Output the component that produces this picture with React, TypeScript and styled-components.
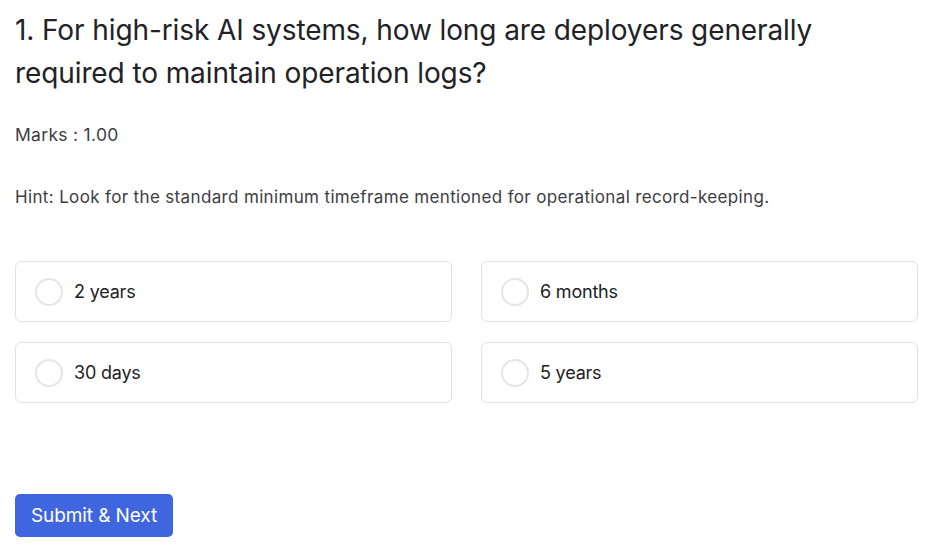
import styled, { createGlobalStyle } from "styled-components";

const GlobalStyle = createGlobalStyle`
  body {
    margin: 0;
    background: #ffffff;
    font-family: Inter, "Noto Sans", sans-serif;
    color: #222226;
  }
`;

const options = ["2 years", "6 months", "30 days", "5 years"];

export default function App() {
  return (
    <>
      <GlobalStyle />
      <StyledPage>
        <StyledQuestion>
          1. For high-risk AI systems, how long are deployers generally required
          to maintain operation logs?
        </StyledQuestion>
        <StyledMarks>Marks : 1.00</StyledMarks>
        <StyledHint>
          Hint: Look for the standard minimum timeframe mentioned for
          operational record-keeping.
        </StyledHint>
        <StyledOptions>
          {options.map((option) => (
            <StyledOption key={option}>
              <StyledRadio />
              <span>{option}</span>
            </StyledOption>
          ))}
        </StyledOptions>
        <StyledSubmit>Submit &amp; Next</StyledSubmit>
      </StyledPage>
    </>
  );
}

const StyledPage = styled.div`
  display: flex;
  flex-direction: column;
  align-items: flex-start;
  padding: 9px 21px 0 15px;
`;

const StyledQuestion = styled.h1`
  margin: 0;
  max-width: 860px;
  font-size: 28px;
  font-weight: 400;
  line-height: 43px;
  letter-spacing: -0.1px;
  color: #222226;
`;

const StyledMarks = styled.div`
  margin-top: 28px;
  font-size: 17.5px;
  line-height: 24px;
  color: #3d3d42;
  letter-spacing: 0.3px;
`;

const StyledHint = styled.div`
  margin-top: 38px;
  font-size: 17px;
  line-height: 24px;
  color: #3d3d42;
  letter-spacing: 0.35px;
`;

const StyledOptions = styled.div`
  margin-top: 52px;
  width: 100%;
  display: grid;
  grid-template-columns: 1fr 1fr;
  column-gap: 29px;
  row-gap: 20px;
`;

const StyledOption = styled.label`
  display: flex;
  align-items: center;
  gap: 11px;
  height: 61px;
  box-sizing: border-box;
  padding: 0 19px;
  border: 1px solid #e2e2e6;
  border-radius: 6px;
  font-size: 18px;
  letter-spacing: -0.2px;
  color: #222226;
`;

const StyledRadio = styled.span`
  width: 28px;
  height: 28px;
  box-sizing: border-box;
  border: 2px solid #e4e4ea;
  border-radius: 50%;
  flex-shrink: 0;
`;

const StyledSubmit = styled.button`
  margin-top: 91px;
  height: 43px;
  padding: 0 16px;
  border: none;
  border-radius: 5px;
  background: #4066df;
  color: #ffffff;
  font-family: Inter, "Noto Sans", sans-serif;
  font-size: 19px;
  letter-spacing: -0.1px;
`;
